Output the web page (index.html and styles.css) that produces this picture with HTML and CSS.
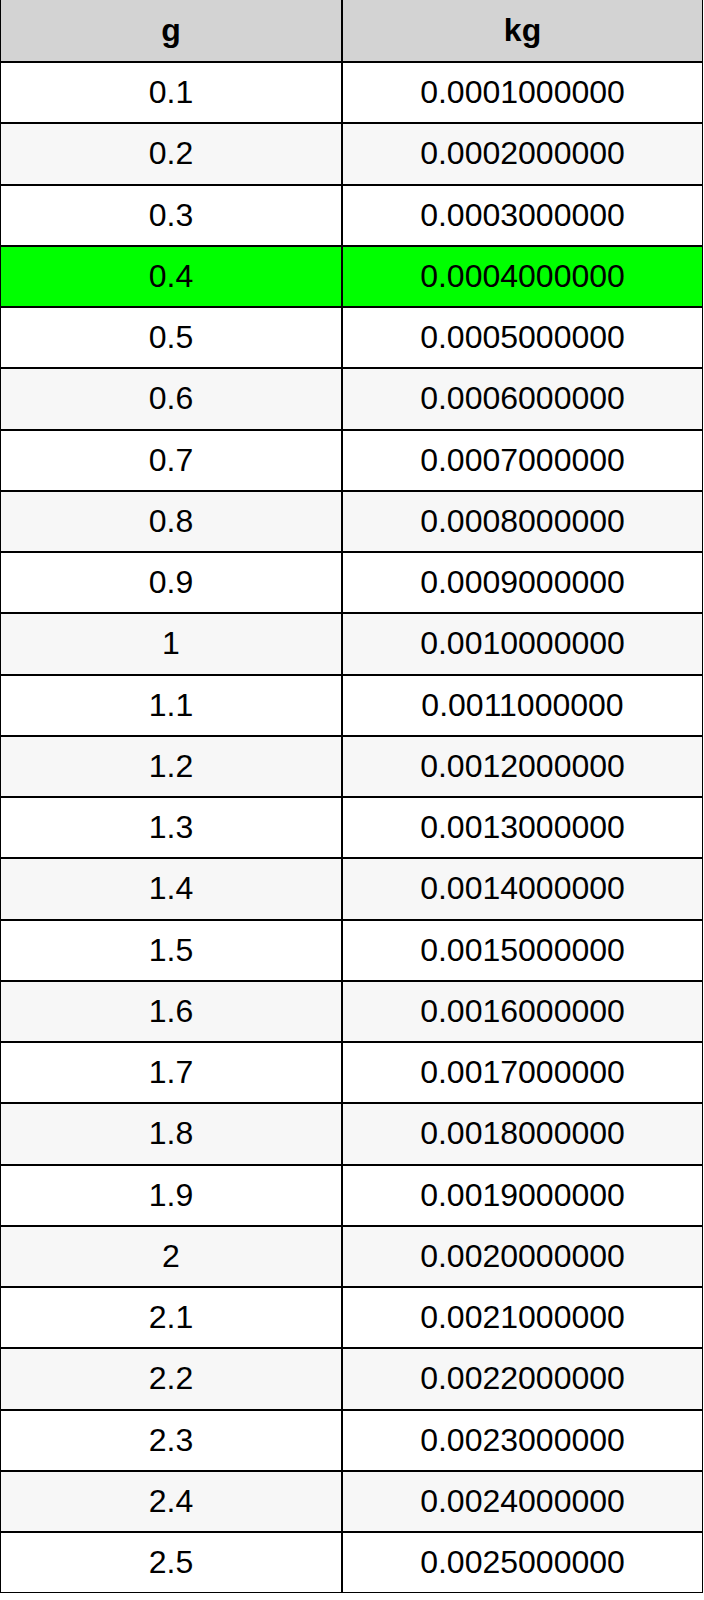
FILE: index.html
```html
<!DOCTYPE html>
<html>
<head>
<meta charset="utf-8">
<link rel="stylesheet" href="styles.css">
</head>
<body>
<table class="conv">
<thead>
<tr><th class="c1">g</th><th class="c2">kg</th></tr>
</thead>
<tbody>
<tr><td>0.1</td><td>0.0001000000</td></tr>
<tr><td>0.2</td><td>0.0002000000</td></tr>
<tr><td>0.3</td><td>0.0003000000</td></tr>
<tr class="hl"><td>0.4</td><td>0.0004000000</td></tr>
<tr><td>0.5</td><td>0.0005000000</td></tr>
<tr><td>0.6</td><td>0.0006000000</td></tr>
<tr><td>0.7</td><td>0.0007000000</td></tr>
<tr><td>0.8</td><td>0.0008000000</td></tr>
<tr><td>0.9</td><td>0.0009000000</td></tr>
<tr><td>1</td><td>0.0010000000</td></tr>
<tr><td>1.1</td><td>0.0011000000</td></tr>
<tr><td>1.2</td><td>0.0012000000</td></tr>
<tr><td>1.3</td><td>0.0013000000</td></tr>
<tr><td>1.4</td><td>0.0014000000</td></tr>
<tr><td>1.5</td><td>0.0015000000</td></tr>
<tr><td>1.6</td><td>0.0016000000</td></tr>
<tr><td>1.7</td><td>0.0017000000</td></tr>
<tr><td>1.8</td><td>0.0018000000</td></tr>
<tr><td>1.9</td><td>0.0019000000</td></tr>
<tr><td>2</td><td>0.0020000000</td></tr>
<tr><td>2.1</td><td>0.0021000000</td></tr>
<tr><td>2.2</td><td>0.0022000000</td></tr>
<tr><td>2.3</td><td>0.0023000000</td></tr>
<tr><td>2.4</td><td>0.0024000000</td></tr>
<tr><td>2.5</td><td>0.0025000000</td></tr>
</tbody>
</table>
</body>
</html>
```
FILE: styles.css
```css
html, body {
  margin: 0;
  padding: 0;
  background: #fff;
}
.conv {
  border-collapse: separate;
  border-spacing: 0;
  table-layout: fixed;
  width: 703px;
  font-family: "Liberation Sans", Arial, sans-serif;
  font-size: 32px;
  color: #000;
}
.conv th, .conv td {
  box-sizing: border-box;
  border: 1px solid #000;
  text-align: center;
  vertical-align: middle;
  padding: 0;
}
.conv th {
  height: 62px;
  border-top: none;
  background: #d3d3d3;
  font-weight: bold;
}
.conv .c1 { width: 342px; }
.conv .c2 { width: 361px; }
.conv td {
  height: 61.25px;
  background: #fff;
}
.conv tbody tr:nth-child(even) td {
  background: #f7f7f7;
}
.conv tbody tr.hl td {
  background: #00ff00;
}
```
